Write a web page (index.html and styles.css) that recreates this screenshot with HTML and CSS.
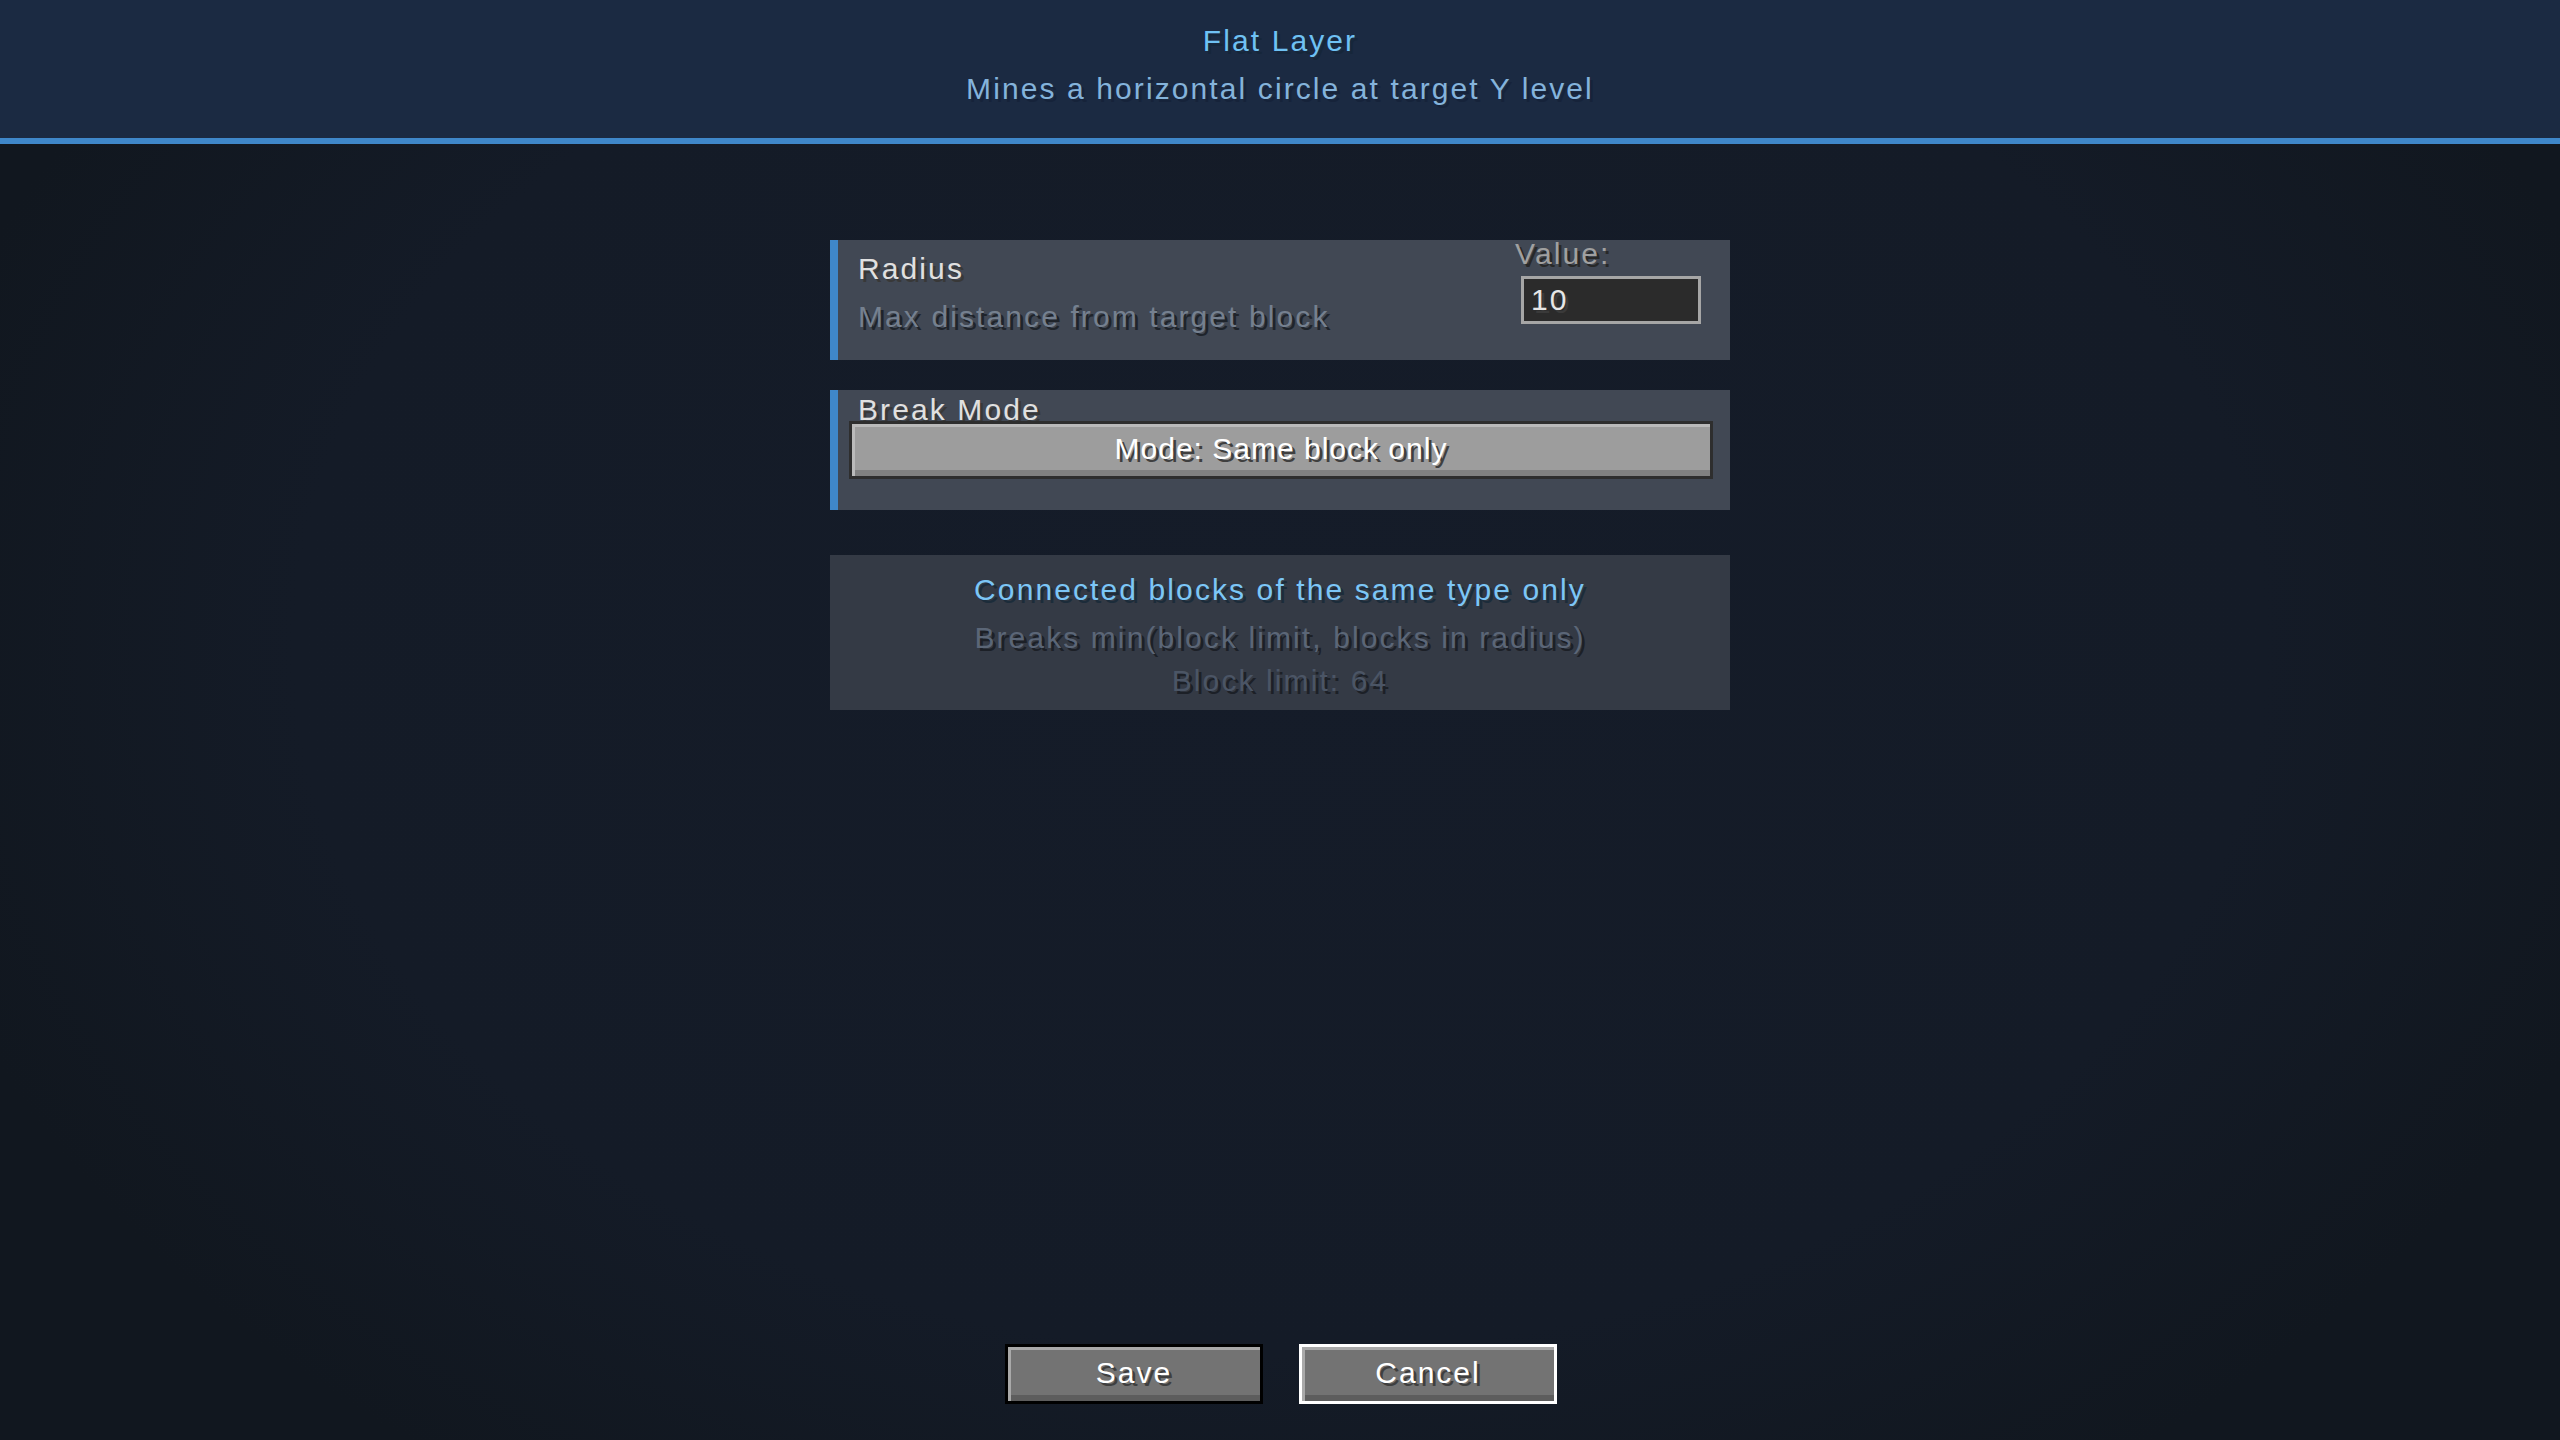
FILE: index.html
```html
<!DOCTYPE html>
<html>
<head>
	<title>Flat Layer</title>
	<link rel="stylesheet" href="styles.css">
</head>
<body>
<header class="topbar">
	<div class="screen-title">Flat Layer</div>
	<div class="screen-sub">Mines a horizontal circle at target Y level</div>
</header>

<main class="settings">
	<section class="option">
		<div class="option-text">
			<div class="option-name">Radius</div>
			<div class="option-desc">Max distance from target block</div>
		</div>
		<div class="value-field">
			<label class="value-label" for="radius">Value:</label>
			<input class="value-input" id="radius" type="text" value="10">
		</div>
	</section>

	<section class="option option-stack">
		<div class="option-name mode-name">Break Mode</div>
		<button class="mc-btn mode-btn">Mode: Same block only</button>
	</section>

	<section class="info">
		<div class="info-head">Connected blocks of the same type only</div>
		<div class="info-line">Breaks min(block limit, blocks in radius)</div>
		<div class="info-line dim">Block limit: 64</div>
	</section>
</main>

<footer class="actions">
	<button class="mc-btn action-btn">Save</button>
	<button class="mc-btn action-btn focused">Cancel</button>
</footer>
</body>
</html>
```

FILE: styles.css
```css
html, body{
	margin: 0;
	height: 100%;
}
body{
	display: flex;
	flex-direction: column;
	background-color: #131a26;
	background-image: radial-gradient(ellipse 55% 70% at 50% 45%, #151c29 0%, #141b27 70%, #11171f 100%);
	font-family: "Liberation Sans", Arial, sans-serif;
	font-size: 30px;
	line-height: 30px;
	letter-spacing: 2.1px;
	color: #e0e0e0;
}

/* header strip */
.topbar{
	background: #1b2a42;
	border-bottom: 6px solid #3f87c9;
	padding: 26px 0 34px;
	text-align: center;
}
.screen-title{
	color: #6fc1f3;
	text-shadow: 3px 3px 0 #16263a;
}
.screen-sub{
	margin-top: 18px;
	color: #84b3db;
	text-shadow: 3px 3px 0 #16233a;
}

/* option list */
.settings{
	flex: 1;
	width: 900px;
	margin: 0 auto;
	padding-top: 96px;
	display: flex;
	flex-direction: column;
}
.option{
	box-sizing: border-box;
	height: 120px;
	display: flex;
	background: #414854;
	border-left: 8px solid #3f87c9;
	padding: 0 29px 0 20px;
	margin-bottom: 30px;
}
.option-text{
	flex: 1;
	padding-top: 14px;
}
.option-name{
	color: #e0e0e0;
	text-shadow: 3px 3px 0 #383838;
}
.option-desc{
	margin-top: 18px;
	color: #75808f;
	text-shadow: 3px 3px 0 #1f242b;
}
.value-field{
	width: 186px;
	padding-top: 2px;
	display: flex;
	flex-direction: column;
	align-items: flex-end;
}
.value-label{
	align-self: flex-start;
	line-height: 24px;
	color: #a0a0a0;
	text-shadow: 3px 3px 0 #282828;
}
.value-input{
	box-sizing: border-box;
	margin-top: 10px;
	width: 180px;
	height: 48px;
	padding: 0 0 0 7px;
	border: 3px solid #a6a6a6;
	background: #2b2b2b;
	outline: none;
	font: inherit;
	letter-spacing: 2px;
	color: #e6e6e6;
	text-shadow: 3px 3px 0 #3a3a3a;
}

.option-stack{
	flex-direction: column;
	padding-top: 8px;
	margin-bottom: 45px;
}
.mode-name{
	line-height: 23px;
}

/* stone buttons */
.mc-btn{
	box-sizing: border-box;
	display: flex;
	align-items: center;
	justify-content: center;
	flex-shrink: 0;
	padding: 0 0 3px;
	font: inherit;
	letter-spacing: 2px;
	color: #ffffff;
	text-shadow: 3px 3px 0 #3f3f3f;
	background: #737373;
	border: 3px solid #000;
	box-shadow: inset 3px 3px 0 #a9a9a9, inset 0 -6px 0 #5d5d5d;
	cursor: pointer;
}
.mode-btn{
	width: 864px;
	height: 58px;
	margin-left: -9px;
	letter-spacing: 1px;
	background: #9d9d9d;
	border-color: #2e2e2e;
	box-shadow: inset 3px 3px 0 #bababa, inset 0 -6px 0 #818181;
}

/* description box */
.info{
	background: #343a45;
	padding: 20px 0 14px;
	text-align: center;
}
.info-head{
	color: #7cc6f6;
	text-shadow: 3px 3px 0 #1c2c3a;
}
.info-line{
	margin-top: 18px;
	color: #5b6677;
	text-shadow: 3px 3px 0 #1c2027;
}
.info-line.dim{
	margin-top: 13px;
	color: #4b5565;
}

/* bottom row */
.actions{
	display: flex;
	justify-content: center;
	gap: 36px;
	padding-bottom: 36px;
	padding-left: 2px;
}
.action-btn{
	width: 258px;
	height: 60px;
}
.action-btn.focused{
	border-color: #ffffff;
}
```
